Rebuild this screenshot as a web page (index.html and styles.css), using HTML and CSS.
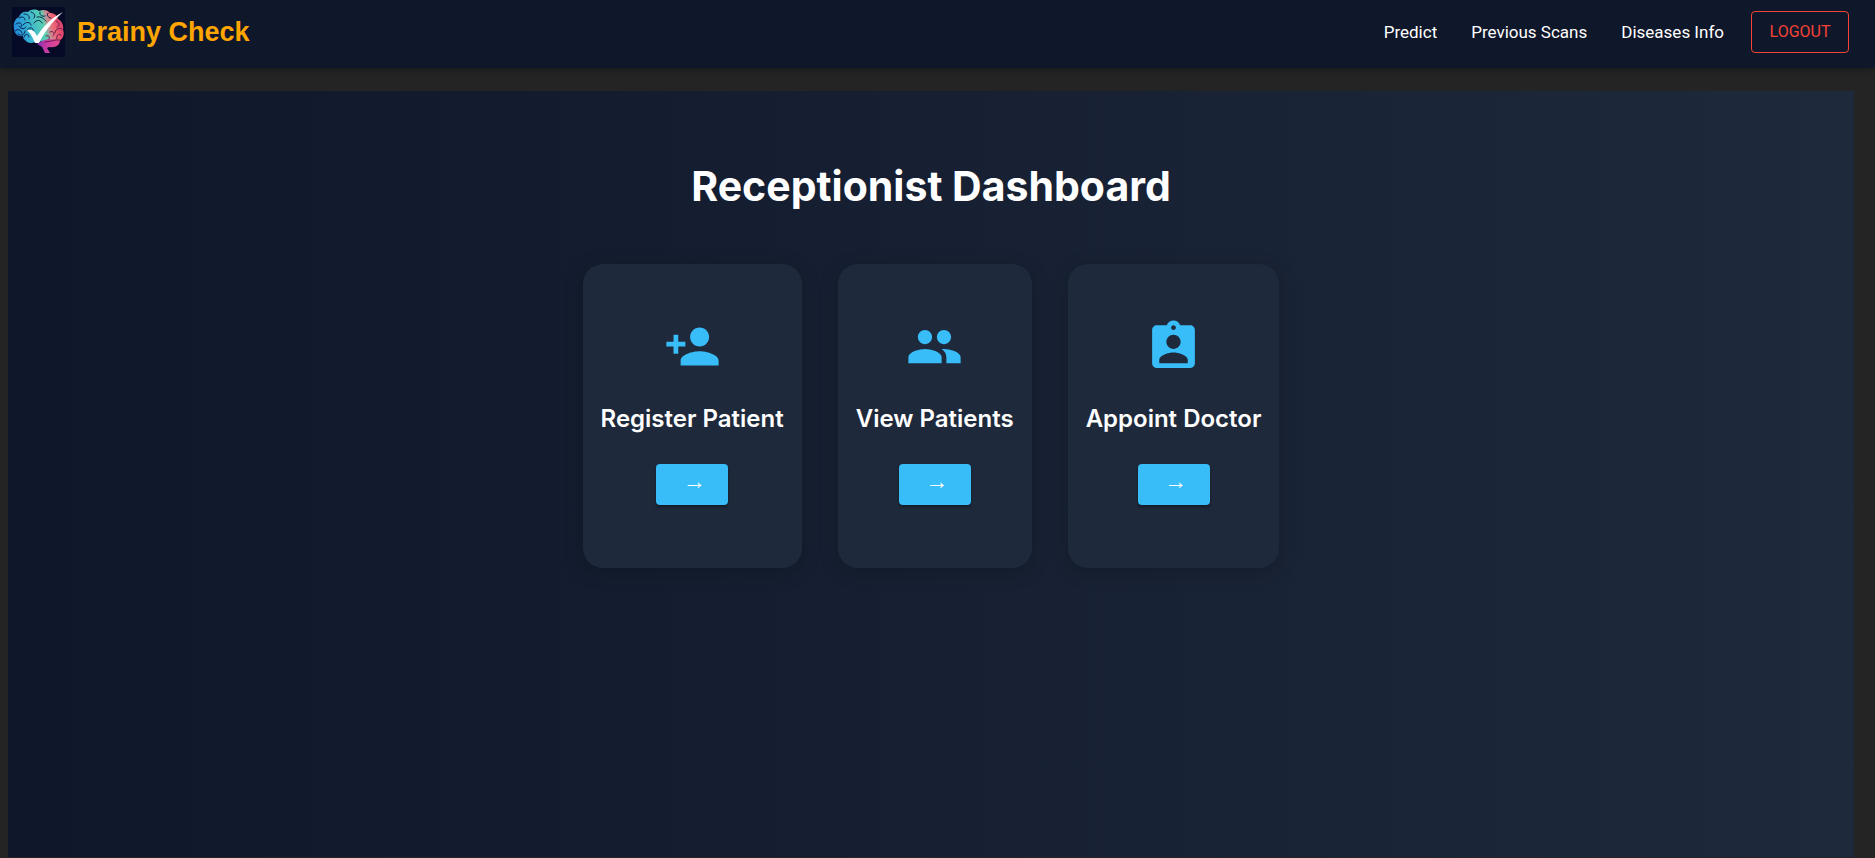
FILE: index.html
```html
<!DOCTYPE html>
<html lang="en">
<head>
<meta charset="utf-8">
<title>Brainy Check</title>
<link rel="stylesheet" href="styles.css">
</head>
<body>
<header class="navbar">
  <a class="brand" href="#">
    <svg class="brand-logo" viewBox="0 0 53 50" aria-hidden="true">
      <defs>
        <linearGradient id="brain" gradientUnits="userSpaceOnUse" x1="4" y1="30" x2="48" y2="20">
          <stop offset="0" stop-color="#2389dc"/>
          <stop offset="0.3" stop-color="#36b0d2"/>
          <stop offset="0.66" stop-color="#5ad0b0"/>
          <stop offset="0.76" stop-color="#c98c92"/>
          <stop offset="0.86" stop-color="#ee6a78"/>
          <stop offset="1" stop-color="#e2476c"/>
        </linearGradient>
        <linearGradient id="stem" x1="0" y1="0" x2="1" y2="0">
          <stop offset="0" stop-color="#7a30b0"/>
          <stop offset="0.4" stop-color="#c83aa4"/>
          <stop offset="1" stop-color="#e64a8c"/>
        </linearGradient>
      </defs>
      <rect width="53" height="50" fill="#050a26"/>
      <path fill="url(#brain)" d="M2 21C1 16 3 12 7 10 8 6 12 4 16 5 19 2 24 2 27 4 31 2 36 3 38 6 42 6 45 8 46 12 50 14 52 19 51 23 53 27 51 32 47 34L34 34 23 35C19 37 15 36 13 33 11 32 11 30 11 29 5 30 2 26 2 21Z"/>
      <path fill="url(#stem)" d="M30 34 36 32 48 33C48 38 44 41 37 40L35 41 38 46 33 46 30 40 25 37Z"/>
      <g fill="none" stroke="#0b2450" stroke-width="1" stroke-linecap="round">
        <path d="M7 11C10 9 13 10 13 13M4 17C8 14 11 17 9 20M3 24C6 21 9 23 10 26M12 7C16 7 18 9 17 12M11 18C14 14 19 15 19 18M19 5C22 6 24 8 22 11M15 23C18 19 22 21 21 24M22 16C25 12 29 13 30 16M28 5C27 8 30 10 33 9M36 6C34 9 37 11 39 11M12 30C13 26 17 27 17 30M7 19C9 23 13 22 14 20M25 10C29 9 32 12 34 14M6 27C10 30 13 27 13 24"/>
        <path stroke="#6b1d50" d="M44 14C48 16 48 19 45 20M50 22C46 20 43 23 43 26M38 25C42 23 43 27 41 29M49 28C46 26 44 29 45 32M33 35C39 35 42 32 48 33M34 29C37 28 38 30 37 32"/>
      </g>
      <path fill="#fff" d="M15 23 20 23C23 25 24 27 25 29 31 20 39 11 51 5 41 14 33 24 27 36L23 36C21 31 19 27 15 23Z"/>
    </svg>
    <span class="brand-name">Brainy Check</span>
  </a>
  <nav class="nav-links">
    <a class="nav-link" href="#">Predict</a>
    <a class="nav-link" href="#">Previous Scans</a>
    <a class="nav-link" href="#">Diseases Info</a>
    <button class="logout" type="button">LOGOUT</button>
  </nav>
</header>
<main class="dashboard">
  <h1 class="title">Receptionist Dashboard</h1>
  <div class="cards">
    <section class="card">
      <svg class="card-icon" viewBox="0 0 24 24" aria-hidden="true"><path d="M15 12c2.210 0 4-1.790 4-4s-1.790-4-4-4-4 1.790-4 4 1.790 4 4 4zm-9-2V7H4v3H1v2h3v3h2v-3h3v-2H6zm9 4c-2.670 0-8 1.340-8 4v2h16v-2c0-2.660-5.330-4-8-4z"/></svg>
      <h2 class="card-title">Register Patient</h2>
      <button class="card-button" type="button" aria-label="Register Patient">→</button>
    </section>
    <section class="card">
      <svg class="card-icon" viewBox="0 0 24 24" aria-hidden="true"><path d="M16 11c1.660 0 2.990-1.340 2.990-3S17.660 5 16 5c-1.660 0-3 1.340-3 3s1.340 3 3 3zm-8 0c1.660 0 2.990-1.340 2.990-3S9.660 5 8 5C6.340 5 5 6.340 5 8s1.340 3 3 3zm0 2c-2.330 0-7 1.170-7 3.500V19h14v-2.500c0-2.330-4.670-3.500-7-3.500zm8 0c-.29 0-.62.020-.97.050 1.160.84 1.970 1.970 1.970 3.450V19h6v-2.500c0-2.330-4.670-3.500-7-3.500z"/></svg>
      <h2 class="card-title">View Patients</h2>
      <button class="card-button" type="button" aria-label="View Patients">→</button>
    </section>
    <section class="card">
      <svg class="card-icon" viewBox="0 0 24 24" aria-hidden="true"><path d="M19 3h-4.180C14.400 1.840 13.300 1 12 1c-1.300 0-2.400.84-2.820 2H5c-1.100 0-2 .9-2 2v14c0 1.100.9 2 2 2h14c1.100 0 2-.9 2-2V5c0-1.100-.9-2-2-2zm-7 0c.55 0 1 .45 1 1s-.45 1-1 1-1-.45-1-1 .45-1 1-1zm0 4c1.660 0 3 1.340 3 3s-1.340 3-3 3-3-1.340-3-3 1.340-3 3-3zm6 12H6v-1.400c0-2 4-3.100 6-3.100s6 1.100 6 3.100V19z"/></svg>
      <h2 class="card-title">Appoint Doctor</h2>
      <button class="card-button" type="button" aria-label="Appoint Doctor">→</button>
    </section>
  </div>
</main>
</body>
</html>
```
FILE: styles.css
```css
* {
  box-sizing: border-box;
}

body {
  margin: 0;
  min-height: 100vh;
  display: flex;
  flex-direction: column;
  background: #242424;
  color: #fff;
  font-family: Roboto, sans-serif;
}

.navbar {
  display: flex;
  align-items: center;
  justify-content: space-between;
  height: 68px;
  padding: 0 26px 4px 12px;
  background: #0f172a;
  box-shadow: 0 2px 6px rgba(0, 0, 0, 0.3);
}

.brand {
  display: flex;
  align-items: center;
  gap: 12px;
  text-decoration: none;
}

.brand-logo {
  width: 53px;
  height: 50px;
}

.brand-name {
  color: #ffa500;
  font: bold 27px/32px "Liberation Sans", Arial, sans-serif;
}

.nav-links {
  display: flex;
  align-items: center;
}

.nav-link {
  margin-right: 34px;
  color: #fff;
  font-size: 17px;
  font-weight: 400;
  line-height: 24px;
  text-decoration: none;
}

.nav-link:nth-of-type(3) {
  margin-right: 27px;
}

.logout {
  min-width: 98px;
  height: 42px;
  padding: 0 16px;
  border: 1px solid #f44336;
  border-radius: 4px;
  background: transparent;
  color: #f44336;
  font: 400 16px/24px Roboto, sans-serif;
}

.dashboard {
  flex: 1;
  margin: 23px 21px 1px 8px;
  padding: 63px 32px 32px;
  background: linear-gradient(to right, #0f172a, #1e293b);
}

.title {
  margin: 0 0 46px;
  font: 700 41px/64px Inter, sans-serif;
  text-align: center;
}

.cards {
  display: flex;
  justify-content: center;
  flex-wrap: wrap;
  gap: 36px;
}

.card {
  display: flex;
  flex-direction: column;
  align-items: center;
  padding: 54px 18px 63px;
  border-radius: 20px;
  background: #1e293b;
  box-shadow: 0 4px 20px rgba(0, 0, 0, 0.2);
}

.card-icon {
  width: 57px;
  height: 57px;
  fill: #38bdf8;
}

.card-title {
  margin: 28px 0 29px;
  font: 600 24px/32px Inter, sans-serif;
}

.card-button {
  width: 72px;
  height: 41px;
  padding: 0 0 7px 4px;
  border: 0;
  border-radius: 4px;
  background: #38bdf8;
  box-shadow: 0 2px 3px rgba(0, 0, 0, 0.35);
  color: #fff;
  font: 400 23px/24px "Liberation Sans", Arial, sans-serif;
}
```
